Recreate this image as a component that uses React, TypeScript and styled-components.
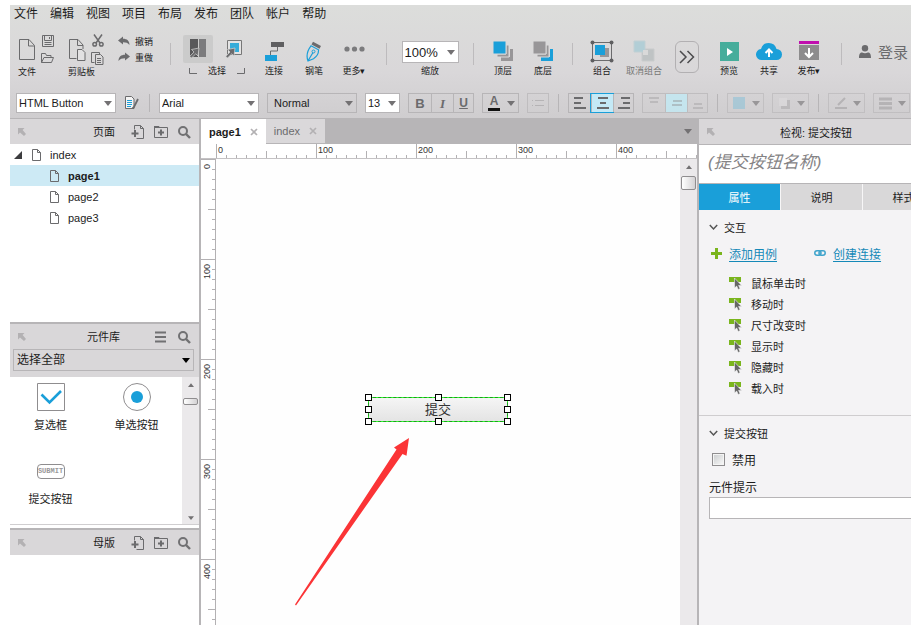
import React, { useLayoutEffect, useRef, useState } from "react";
import styled, { createGlobalStyle, css } from "styled-components";

const BLUE = "#1a9fd9";
const LINE = "#b7b5b7";
const GREY = "#6b6b6d";

const Global = createGlobalStyle`
  *, *::before, *::after { box-sizing: border-box; }
  html, body { margin: 0; background: #fff; }
  body, button, input, select {
    font-family: "Liberation Sans", "Noto Sans CJK SC", sans-serif;
    font-size: 11px;
    color: #1c1c1c;
  }
  button { padding: 0; border: 0; background: none; cursor: pointer; }
  ul, h2 { margin: 0; padding: 0; list-style: none; font-weight: normal; }
  svg { display: block; flex: none; }
`;

const Page = styled.div`
  display: flex;
  flex-direction: column;
  height: 100vh;
  padding: 5px 11px 0 10px;
  overflow: hidden;
`;

const Header = styled.header`
  flex: none;
  overflow: hidden;
  background: linear-gradient(#dcdddb, #d9d7d9 60%, #cfcdcf);
  border-bottom: 1px solid ${LINE};
`;

const MenuBar = styled.nav`
  display: flex;
  gap: 12px;
  height: 21px;
  padding-left: 4px;
`;

const MenuItem = styled.button`
  height: 18px;
  font-size: 12px;
  line-height: 18px;
  white-space: nowrap;
`;

const Toolbar = styled.div`
  display: flex;
  align-items: flex-start;
  height: 62px;
  padding: 7px 3px 0 8px;
`;

const ToolGroup = styled.div`
  display: flex;
  flex: none;
  flex-direction: column;
  width: 40px;
  margin-right: 10px;
`;

const GroupIcons = styled.div`
  display: flex;
  gap: 5px;
  align-items: center;
  height: 33px;
`;

const IconStack = styled.div`
  display: flex;
  flex-direction: column;
  gap: 5px;
`;

const IconButton = styled.button`
  display: flex;
  flex: none;
  align-items: center;
  justify-content: center;
`;

const ToolLabel = styled.span`
  font-size: 9px;
  line-height: 12px;
  white-space: nowrap;
`;

const History = styled.div`
  display: flex;
  flex: none;
  flex-direction: column;
  width: 40px;
`;

const HistoryButton = styled.button`
  display: flex;
  gap: 5px;
  align-items: center;
  height: 16px;
  font-size: 9px;
  white-space: nowrap;
`;

const ToolDivider = styled.span<{ $gap: number }>`
  flex: none;
  width: 1px;
  height: 22px;
  margin: 10px ${(p) => p.$gap}px 0;
  background: #bdbbbd;
`;

const SelectTools = styled.div`
  display: flex;
  flex: none;
  flex-direction: column;
  width: 68px;
  margin-right: 3px;
  padding-top: 2px;
`;

const SelectModes = styled.div`
  display: flex;
  gap: 6px;
  height: 28px;
`;

const ModeButton = styled(IconButton)<{ $active?: boolean }>`
  width: 30px;
  height: 28px;
  border-radius: 2px;
  background: ${(p) => (p.$active ? "#cbcbcb" : "transparent")};
`;

const BracketRow = styled.div`
  display: flex;
  align-items: center;
  justify-content: center;
  gap: 11px;
  height: 16px;
`;

const Tool = styled.button<{ $wide?: boolean; $muted?: boolean }>`
  display: flex;
  flex: none;
  flex-direction: column;
  align-items: center;
  width: ${(p) => (p.$wide ? 44 : 40)}px;
  color: ${(p) => (p.$muted ? "#777" : "#1c1c1c")};
`;

const ToolIcon = styled.span`
  display: flex;
  align-items: center;
  justify-content: center;
  height: 32px;
  padding-top: 4px;
`;

const ZoomField = styled.label`
  display: flex;
  flex: none;
  flex-direction: column;
  align-items: center;
  width: 62px;
  margin-right: 3px;
  padding-top: 8px;
  gap: 2px;
`;

const MoreTools = styled(IconButton)`
  width: 24px;
  height: 32px;
  margin: 8px 10px 0 9px;
  border: 1px solid #b2b0b2;
  border-radius: 6px;
`;

const Login = styled.button`
  display: flex;
  flex: none;
  gap: 7px;
  align-items: center;
  height: 20px;
  margin: 8px 0 0 auto;
  font-size: 15px;
  color: ${GREY};
  white-space: nowrap;
`;

const FormatBar = styled.div`
  display: flex;
  gap: 8px;
  align-items: center;
  height: 30px;
  padding-left: 6px;
`;

const FormatDivider = styled.span`
  flex: none;
  width: 1px;
  height: 18px;
  margin: 0 1px;
  background: #b7b5b7;
`;

const Combo = styled.span<{ $width?: number; $height: number; $plain?: boolean; $dark?: boolean }>`
  position: relative;
  display: block;
  flex: none;
  width: ${(p) => (p.$width ? `${p.$width}px` : "auto")};
  height: ${(p) => p.$height}px;
  border: 1px solid ${LINE};
  background: ${(p) => (p.$plain ? "transparent" : "#fff")};
  &::after {
    content: "";
    position: absolute;
    top: calc(50% - 2px);
    right: 3px;
    border: 4px solid transparent;
    border-top: 5px solid ${(p) => (p.$dark ? "#000" : "#737173")};
    border-bottom: 0;
    pointer-events: none;
  }
`;

const ComboSelect = styled.select<{ $size: number; $indent?: number }>`
  display: block;
  width: 100%;
  height: 100%;
  margin: 0;
  padding: 0 0 0 ${(p) => p.$indent ?? 2}px;
  border: 0;
  outline: 0;
  appearance: none;
  background: transparent;
  font-size: ${(p) => p.$size}px;
`;

const Segments = styled.div<{ $faded?: boolean }>`
  display: flex;
  flex: none;
  height: 20px;
  border: 1px solid ${LINE};
  opacity: ${(p) => (p.$faded ? 0.7 : 1)};
`;

const Segment = styled(IconButton)<{ $tone?: "active" | "soft" }>`
  width: 22px;
  height: 18px;
  & + & { border-left: 1px solid ${LINE}; }
  &:last-child { width: 20px; }
  ${(p) =>
    p.$tone === "active" &&
    css`
      background: #c4e9f6;
      outline: 1px solid ${BLUE};
    `}
  ${(p) =>
    p.$tone === "soft" &&
    css`
      background: #c0eefa;
    `}
`;

const SplitButton = styled.button<{ $faded?: boolean }>`
  display: flex;
  flex: none;
  align-items: center;
  justify-content: space-between;
  width: 37px;
  height: 20px;
  padding: 0 3px 0 5px;
  border: 1px solid ${LINE};
  opacity: ${(p) => (p.$faded ? 0.6 : 1)};
`;

const Workspace = styled.main`
  display: flex;
  flex: 1;
  min-height: 0;
`;

const LeftSide = styled.aside`
  display: flex;
  flex: none;
  flex-direction: column;
  width: 191px;
  border-right: 2px solid ${LINE};
`;

const Panel = styled.section<{ $height?: number }>`
  display: flex;
  flex: ${(p) => (p.$height ? "none" : "1")};
  flex-direction: column;
  min-height: ${(p) => p.$height ?? 0}px;
  & + & { border-top: 2px solid ${LINE}; }
`;

const PanelHeader = styled.div`
  display: flex;
  flex: none;
  align-items: center;
  height: 25px;
  padding: 0 8px;
  background: #d9d7d9;
`;

const PanelTitle = styled.h2<{ $gap: number }>`
  margin: 0 ${(p) => p.$gap}px 0 auto;
  font-size: 11px;
  line-height: 16px;
`;

const PanelActions = styled.div`
  display: flex;
  gap: 9px;
`;

const TreeRow = styled.li<{ $level: number; $selected?: boolean }>`
  display: flex;
  gap: 7px;
  align-items: center;
  height: 21px;
  padding-left: ${(p) => (p.$level ? 37 : 4)}px;
  background: ${(p) => (p.$selected ? "#cdeaf5" : "transparent")};
  font-weight: ${(p) => (p.$selected ? "bold" : "normal")};
`;

const LibraryFilter = styled.div`
  padding: 0 5px 6px 3px;
  background: #d9d7d9;
`;

const LibraryBody = styled.div`
  display: flex;
  height: 148px;
  margin-bottom: 3px;
  border-bottom: 1px solid #d0ced0;
`;

const WidgetGrid = styled.div`
  display: grid;
  flex: 1;
  grid-template-columns: 1fr 1fr;
  grid-auto-rows: 74px;
`;

const Widget = styled.button`
  display: flex;
  flex-direction: column;
  align-items: center;
  padding: 5px 5px 0 0;
  font-size: 11px;
`;

const WidgetIcon = styled.span`
  display: flex;
  align-items: center;
  height: 30px;
  margin-bottom: 4px;
`;

const SubmitBadge = styled.span`
  display: block;
  width: 28px;
  height: 15px;
  border: 1px solid #8f8d8f;
  border-radius: 4px;
  font: bold 7px/13px "Liberation Mono", monospace;
  color: #9a989a;
  text-align: center;
`;

const Scrollbar = styled.div`
  display: flex;
  flex: none;
  flex-direction: column;
  align-items: center;
  justify-content: space-between;
  width: 17px;
  padding: 6px 0 4px;
  background: #ebe9eb;
`;

const ScrollTop = styled.div<{ $gap: number }>`
  display: flex;
  flex-direction: column;
  gap: ${(p) => p.$gap}px;
  align-items: center;
`;

const Thumb = styled.span<{ $height: number }>`
  display: block;
  width: 15px;
  height: ${(p) => p.$height}px;
  border: 1px solid #8f8d8f;
  border-radius: 2px;
  background: linear-gradient(90deg, #fff, #d4d2d4);
`;

const Center = styled.section`
  display: flex;
  flex: 1;
  flex-direction: column;
  min-width: 0;
  border-right: 2px solid ${LINE};
`;

const TabBar = styled.div`
  display: flex;
  flex: none;
  align-items: center;
  height: 25px;
  padding-right: 5px;
  background: ${LINE};
`;

const PageTab = styled.button<{ $active?: boolean }>`
  display: flex;
  gap: 9px;
  align-items: center;
  height: ${(p) => (p.$active ? 25 : 24)}px;
  padding: 0 8px;
  align-self: flex-start;
  background: ${(p) => (p.$active ? "#fff" : "#dad8da")};
  color: ${(p) => (p.$active ? "#1c1c1c" : "#6b6b6d")};
  font-weight: ${(p) => (p.$active ? "bold" : "normal")};
`;

const TabMenu = styled(IconButton)`
  height: 25px;
  margin-left: auto;
`;

const TopRuler = styled.div`
  display: flex;
  flex: none;
  height: 15px;
  padding-left: 15px;
  border-bottom: 1px solid #c4c2c4;
`;

const CanvasRow = styled.div`
  display: flex;
  flex: 1;
  min-height: 0;
`;

const SideRuler = styled.div`
  display: flex;
  flex: none;
  flex-direction: column;
  width: 15px;
  border-right: 1px solid #b3b1b3;
`;

const RulerTrack = styled.div`
  flex: 1;
  min-width: 0;
  min-height: 0;
  overflow: hidden;
`;

const Canvas = styled.div`
  position: relative;
  flex: 1;
  min-width: 0;
  overflow: hidden;
  background: #fefefe;
`;

const Placed = styled.div<{ $x: number; $y: number }>`
  position: absolute;
  left: ${(p) => p.$x}px;
  top: ${(p) => p.$y}px;
`;

const SubmitWidget = styled.button`
  display: block;
  width: 140px;
  height: 25px;
  border: 1px dashed #1f9a1f;
  background:
    linear-gradient(#f5f5f5, #e4e4e4) padding-box,
    linear-gradient(#2dff2d, #2dff2d) border-box;
  font-size: 13px;
  line-height: 23px;
  color: #333;
`;

const Handle = styled.span<{ $col: number; $row: number }>`
  position: absolute;
  left: calc((100% - 1px) * ${(p) => p.$col / 2} - 3px);
  top: calc((100% - 1px) * ${(p) => p.$row / 2} - 3px);
  width: 7px;
  height: 7px;
  border: 1px solid #000;
  background: #fff;
`;

const Inspector = styled.aside`
  display: flex;
  flex: none;
  flex-direction: column;
  width: 212px;
  overflow: hidden;
  background: #f4f3f5;
`;

const InspectorHeader = styled(PanelHeader)`
  height: 26px;
  border-bottom: 1px solid ${LINE};
`;

const InspectorTitle = styled.h2`
  flex: 1;
  padding-left: 14px;
  font-size: 11px;
  text-align: center;
`;

const NameInput = styled.input`
  flex: none;
  width: 100%;
  height: 39px;
  padding: 0 9px 2px;
  border: 0;
  border-bottom: 1px solid ${LINE};
  outline: 0;
  background: #fff;
  font-size: 17px;
  font-style: italic;
  &::placeholder { color: #858385; opacity: 1; }
`;

const InspectorTabs = styled.div`
  display: flex;
  flex: none;
  gap: 1px;
  height: 26px;
  background: #f7f6f7;
`;

const InspectorTab = styled.button<{ $active?: boolean }>`
  flex: none;
  width: 81px;
  background: ${(p) => (p.$active ? BLUE : "#d9d8d9")};
  color: ${(p) => (p.$active ? "#fff" : "#1c1c1c")};
`;

const Section = styled.section`
  flex: none;
  padding: 8px 0 0 10px;
  & + & { border-top: 1px solid #cfcdcf; }
`;

const SectionToggle = styled.button`
  display: flex;
  gap: 6px;
  align-items: center;
  height: 18px;
`;

const LinkRow = styled.div`
  display: flex;
  gap: 37px;
  height: 18px;
  margin: 8px 0 10px 2px;
`;

const ActionLink = styled.a`
  display: flex;
  gap: 7px;
  align-items: center;
  font-size: 12px;
  color: #1589b8;
  white-space: nowrap;
  text-underline-offset: 2px;
`;

const EventList = styled.ul`
  padding: 0 0 17px 20px;
`;

const EventButton = styled.button`
  display: flex;
  gap: 9px;
  align-items: center;
  height: 21px;
`;

const CheckField = styled.label`
  display: flex;
  gap: 7px;
  align-items: center;
  height: 18px;
  margin: 8px 0 12px 3px;
  font-size: 12px;
`;

const CheckBox = styled.input`
  width: 13px;
  height: 13px;
  margin: 0;
  border: 1px solid #8f8d8f;
  appearance: none;
  background: linear-gradient(135deg, #c9cbcd, #fafafa);
  box-shadow: inset 0 0 0 1px #f4f4f4;
`;

const HintLabel = styled.label`
  display: block;
  font-size: 12px;
  line-height: 17px;
`;

const HintInput = styled.input`
  display: block;
  width: 100%;
  height: 22px;
  border: 1px solid ${LINE};
  border-right: 0;
  background: #fff;
`;

const Caret = ({ up, color = "#737173", w = 8 }: { up?: boolean; color?: string; w?: number }) => (
  <svg width={w} height={w / 2 + 1} viewBox="0 0 8 5" fill={color}>
    <path d={up ? "M0 5h8L4 0z" : "M0 0h8L4 5z"} />
  </svg>
);

const BigFile = () => (
  <svg width="18" height="24" viewBox="0 0 18 24" fill="none" stroke={GREY}>
    <path d="M1.500 1.500h9.500l5.500 6v14h-15zM10.500 1.500v6.500h6" />
  </svg>
);
const Save = () => (
  <svg width="12" height="12" viewBox="0 0 12 12" fill="none" stroke={GREY}>
    <path d="M.5.5h11v11H.5zM2.500.5v5h7v-5M7.500 2v2M2.500 7.500h7M2.500 9.500h7" />
  </svg>
);
const Open = () => (
  <svg width="13" height="12" viewBox="0 0 13 12" fill="none" stroke={GREY}>
    <path d="M.5 10.500v-9h4l1 2h4.500v2M.5 10.500l2.500-5h9.500l-2 5z" />
  </svg>
);
const Paste = () => (
  <svg width="18" height="24" viewBox="0 0 18 24" fill="none" stroke={GREY}>
    <path d="M8.500 20.500h-7v-19h8.500l5 5.500v4M9.500 1.500v6H15" />
    <path d="M9.500 11.500h4.500l3 3v8H9.500z" fill="#e2e1e2" />
  </svg>
);
const Cut = () => (
  <svg width="12" height="13" viewBox="0 0 12 13" fill="none" stroke={GREY} strokeWidth="1.500">
    <path d="M2 .5l6 8.500M10 .5L4 9" />
    <circle cx="2.700" cy="10.300" r="1.800" />
    <circle cx="9.300" cy="10.300" r="1.800" />
  </svg>
);
const Copy = () => (
  <svg width="13" height="13" viewBox="0 0 13 13" fill="none" stroke={GREY}>
    <path d="M3.500 10.500h-3V.5h8v2M4.500 2.500h5l2.500 2.500v7.500H4.500zM6 6.500h4M6 8.500h4M6 10.500h4" />
  </svg>
);
const Bend = ({ flip }: { flip?: boolean }) => (
  <svg width="12" height="10" viewBox="0 0 12 10" fill={GREY}>
    <path transform={flip ? "matrix(-1 0 0 1 12 0)" : undefined} d="M0 4.500L5 .5v2.200c4 0 6.500 2 6.500 6.300C10 7 8 6.300 5 6.300v2.200z" />
  </svg>
);
const Pointer = ({ color = GREY }: { color?: string }) => (
  <path d="M10 9L9 17l-2.200-2.200L2.500 19 .8 17.300 5 13l-2.500-2.500z" fill={color} stroke="#d6d5d6" strokeWidth=".7" />
);
const SelectIntersect = () => (
  <svg width="18" height="20" viewBox="0 0 18 20">
    <path d="M1 0h8v18H1z" fill="#58585a" />
    <path d="M10 0h7v18h-7z" fill="#7b7b7d" />
    <Pointer />
  </svg>
);
const SelectContain = () => (
  <svg width="18" height="20" viewBox="0 0 18 20">
    <path d="M2.500 1.500h14v14h-14z" fill="#e4e4e4" stroke="#777" />
    <path d="M5 4h9v9H5z" fill="#35acd9" />
    <Pointer />
  </svg>
);
const Connect = () => (
  <svg width="21" height="20" viewBox="0 0 21 20">
    <path d="M7 1h13v5H7z" fill="#5f5f61" />
    <path d="M13.500 6v4h-7v4" fill="none" stroke={GREY} />
    <path d="M1 14h12v6H1z" fill={BLUE} />
  </svg>
);
const Pen = () => (
  <svg width="16" height="21" viewBox="0 0 16 21" fill="none">
    <path d="M7 .8l8 4.200-1.500 2.700-8-4.200z" fill={GREY} />
    <path d="M5 4.800l7.500 4c.3 4-2 7-5 9L2 20c-1.500-4-1-10 3-15.200zM2.200 19.500L7 11.500" stroke={BLUE} strokeWidth="1.200" />
    <circle cx="7.500" cy="10.500" r="1.500" stroke={BLUE} />
  </svg>
);
const Dots = () => (
  <svg width="21" height="22" viewBox="0 0 21 22" fill="#7b7b7d">
    <circle cx="3" cy="9" r="2.600" />
    <circle cx="10.500" cy="9" r="2.600" />
    <circle cx="18" cy="9" r="2.600" />
  </svg>
);
const Layers = ({ back }: { back?: boolean }) => (
  <svg width="21" height="21" viewBox="0 0 21 21">
    <path d="M8 20v-4h9V8h3v12z" fill={back ? BLUE : "#989698"} />
    <path d="M4 16v-3h9V4h3v12z" fill="#989698" stroke="#dad9da" />
    <path d="M0 0h13v13H0z" fill={back ? "#989698" : BLUE} stroke="#dad9da" />
  </svg>
);
const GroupIcon = () => (
  <svg width="24" height="24" viewBox="0 0 24 24">
    <path d="M2.500 3.500h19v18h-19z" fill="none" stroke={GREY} />
    <path d="M10 9h9v9h-9z" fill="#989698" />
    <path d="M5 6h10v10H5z" fill={BLUE} />
    <g fill="#5f5f61">
      <circle cx="2.500" cy="3.500" r="2" />
      <circle cx="21.500" cy="3.500" r="2" />
      <circle cx="2.500" cy="21.500" r="2" />
      <circle cx="21.500" cy="21.500" r="2" />
    </g>
  </svg>
);
const UngroupIcon = () => (
  <svg width="22" height="23" viewBox="0 0 22 23">
    <path d="M9 9h12v12H9z" fill="#bfc3c4" stroke="#c9cbcc" />
    <path d="M1 1h11v11H1z" fill="#b2ced6" stroke="#c1d0d4" />
    <path d="M10 10h5v5h-5z" fill="#d9d9d9" />
  </svg>
);
const Chevrons = () => (
  <svg width="16" height="14" viewBox="0 0 16 14" fill="none" stroke="#4c4c4e" strokeWidth="1.500">
    <path d="M1 1l6 6-6 6M8.500 1l6 6-6 6" />
  </svg>
);
const Preview = () => (
  <svg width="19" height="19" viewBox="0 0 19 19">
    <path d="M0 0h19v19H0z" fill="#46ad9b" />
    <path d="M7 6l6 4-6 4z" fill="#fff" />
  </svg>
);
const Share = () => (
  <svg width="26" height="20" viewBox="0 0 26 20">
    <path d="M6 19a5.500 5.500 0 01-1-11 8 8 0 0115.500 0A5.500 5.500 0 0120.500 19z" fill={BLUE} />
    <path d="M13 16V9M9.500 12L13 8.500l3.500 3.500" fill="none" stroke="#fff" strokeWidth="2" />
  </svg>
);
const Publish = () => (
  <svg width="20" height="20" viewBox="0 0 20 20">
    <path d="M0 0h20v3H0z" fill="#c00fae" />
    <path d="M0 4h20v15H0z" fill="#8d8c8d" />
    <path d="M10 7v9M6 12l4 4 4-4" fill="none" stroke="#fff" strokeWidth="2" />
  </svg>
);
const User = () => (
  <svg width="12" height="13" viewBox="0 0 12 13" fill={GREY}>
    <circle cx="6" cy="3.300" r="3.200" />
    <path d="M0 13c0-4 1-5.500 3.200-5.500 1.600 1 4 1 5.600 0C11 7.500 12 9 12 13z" />
  </svg>
);
const StyleIcon = () => (
  <svg width="16" height="14" viewBox="-1 0 16 14" fill="none">
    <path d="M.5.5h6l2.500 2.500v9.500H.5z" fill="#f4f4f4" stroke={GREY} />
    <path d="M2 4.500h5M2 6.500h5M2 8.500h5M2 10.500h4" stroke={BLUE} />
    <path d="M13 3L9 11l-1.500 1.500" stroke={GREY} strokeWidth="1.800" />
  </svg>
);
const Lines = ({ d, color = GREY, w = 2 }: { d: string; color?: string; w?: number }) => (
  <svg width="14" height="14" viewBox="0 0 14 14" fill="none" stroke={color} strokeWidth={w}>
    <path d={d} />
  </svg>
);
const Letter = styled.span<{ $kind: "A" | "B" | "I" | "U" }>`
  display: block;
  width: ${(p) => (p.$kind === "A" ? "12px" : "auto")};
  height: 15px;
  border-bottom: ${(p) => (p.$kind === "A" ? "3px solid #111" : "0")};
  font-family: ${(p) => (p.$kind === "I" ? '"Liberation Serif", serif' : '"Liberation Sans", sans-serif')};
  font-size: ${(p) => (p.$kind === "A" || p.$kind === "U" ? 12 : 13)}px;
  font-style: ${(p) => (p.$kind === "I" ? "italic" : "normal")};
  font-weight: bold;
  line-height: ${(p) => (p.$kind === "A" ? 11 : 15)}px;
  color: ${GREY};
  text-align: center;
  text-decoration: ${(p) => (p.$kind === "U" ? "underline" : "none")};
`;

const Pin = () => (
  <svg width="8" height="8" viewBox="0 0 8 8" fill="#b3b1b3">
    <path d="M0 0h6.500L4.600 1.900 8 6 6 8 2 4.500 0 6.500z" />
  </svg>
);
const Doc = ({ add }: { add?: boolean }) => (
  <svg width="14" height="14" viewBox="0 0 14 14" fill="none" stroke={GREY}>
    {add ? (
      <>
        <path d="M3.500 4.500v-4h6l3 3v10h-7M9.500.5v3h3" />
        <path d="M.5 8.500h7M4 5v7" strokeWidth="2" />
      </>
    ) : (
      <path d="M3.500 1.500h5l3 3v8h-8zM8.500 1.500v3h3" />
    )}
  </svg>
);
const FolderAdd = () => (
  <svg width="14" height="14" viewBox="0 0 14 14" fill="none" stroke={GREY}>
    <path d="M.5 2.500h13v10H.5z" />
    <path d="M0 1h5l1 2H0z" fill={GREY} stroke="none" />
    <path d="M4 7.500h6M7 4.500v6" strokeWidth="2" />
  </svg>
);
const Search = () => (
  <svg width="14" height="14" viewBox="0 0 14 14" fill="none" stroke="#717173" strokeWidth="2">
    <circle cx="6" cy="6" r="4" />
    <path d="M9 9l4 4" strokeWidth="2.400" />
  </svg>
);
const Close = () => (
  <svg width="8" height="8" viewBox="0 0 8 8" stroke="#b3b1b3" strokeWidth="1.700">
    <path d="M1 1l6 6M7 1L1 7" />
  </svg>
);
const Expand = () => (
  <svg width="8" height="8" viewBox="0 0 8 8" fill="#3c3c3e">
    <path d="M8 0v8H0z" />
  </svg>
);
const Down = () => (
  <svg width="9" height="7" viewBox="0 0 9 7" fill="none" stroke="#555" strokeWidth="1.500">
    <path d="M.8 1l3.700 4 3.700-4" />
  </svg>
);
const Plus = () => (
  <svg width="11" height="11" viewBox="0 0 11 11" stroke="#7ab51d" strokeWidth="3">
    <path d="M5.500 0v11M0 5.500h11" />
  </svg>
);
const Chain = () => (
  <svg width="12" height="8" viewBox="0 0 12 8" fill="none" stroke="#3fa3cb" strokeWidth="1.500">
    <rect x=".8" y="1.800" width="6.200" height="4.400" rx="2.200" />
    <rect x="5" y="1.800" width="6.200" height="4.400" rx="2.200" />
  </svg>
);
const EventIcon = () => (
  <svg width="13" height="14" viewBox="0 0 13 14">
    <path d="M0 1h12v5H0z" fill="#7ab51d" />
    <path d="M5.500 2v10l2.200-1.900 1.500 3.400 1.900-.9-1.500-3.200h3z" fill="#666" stroke="#f4f3f5" strokeWidth=".6" />
  </svg>
);
const CheckWidget = () => (
  <svg width="28" height="28" viewBox="0 0 28 28" fill="none">
    <path d="M.5.5h27v27H.5z" stroke="#8f8d8f" />
    <path d="M4.500 11.500l8 8L24 8" stroke={BLUE} strokeWidth="2.600" />
  </svg>
);
const RadioWidget = () => (
  <svg width="28" height="28" viewBox="0 0 28 28" fill="none">
    <circle cx="14" cy="14" r="13.500" stroke="#8f8d8f" />
    <circle cx="14" cy="14" r="6" fill={BLUE} />
  </svg>
);

const LABEL_ROOM = 24;

function Ruler({ vertical }: { vertical?: boolean }) {
  const track = useRef<HTMLDivElement>(null);
  const [length, setLength] = useState(0);

  useLayoutEffect(() => {
    const el = track.current;
    if (!el) return;
    const measure = () => setLength(vertical ? el.clientHeight : el.clientWidth);
    measure();
    const observer = new ResizeObserver(measure);
    observer.observe(el);
    return () => observer.disconnect();
  }, [vertical]);

  const ticks = Array.from({ length: Math.ceil(length / 10) }, (_, i) => i * 10);
  const line = ticks
    .map((t) => {
      const from = t % 100 === 0 ? 0 : t % 50 === 0 ? 7 : 11;
      return vertical ? `M${from} ${t + 0.5}H15` : `M${t + 0.5} ${from}V15`;
    })
    .join("");
  return (
    <RulerTrack ref={track}>
      <svg width={vertical ? 15 : length} height={vertical ? length : 15} fontSize="9" fill="#333">
        <path d={line} stroke="#b3b1b3" />
        {ticks
          .filter((t) => t % 100 === 0 && t + LABEL_ROOM < length)
          .map((t) =>
            vertical ? (
              <text key={t} textAnchor="end" transform={`translate(9 ${t + 5}) rotate(-90)`}>{t}</text>
            ) : (
              <text key={t} x={t + 2} y="9">{t}</text>
            )
          )}
      </svg>
    </RulerTrack>
  );
}

const Arrow = () => (
  <svg width="116" height="170" viewBox="0 0 116 170">
    <path d="M114 1L99 10.500l2.500 2L0 167.500l1 1L107.500 17l4 1.800z" fill="#fb3436" />
  </svg>
);

const menus = ["文件", "编辑", "视图", "项目", "布局", "发布", "团队", "帐户", "帮助"];
const events = ["鼠标单击时", "移动时", "尺寸改变时", "显示时", "隐藏时", "载入时"];
const handles = [[0, 0], [1, 0], [2, 0], [0, 1], [2, 1], [0, 2], [1, 2], [2, 2]];

interface ToolItemProps {
  label: string;
  icon: React.ReactNode;
  wide?: boolean;
  muted?: boolean;
}
const ToolItem = ({ label, icon, wide, muted }: ToolItemProps) => (
  <Tool $wide={wide} $muted={muted}>
    <ToolIcon>{icon}</ToolIcon>
    <ToolLabel>{label}</ToolLabel>
  </Tool>
);

interface DropdownProps {
  label: string;
  value: string;
  width?: number;
  height?: number;
  size?: number;
  indent?: number;
  plain?: boolean;
  dark?: boolean;
}
const Dropdown = ({ label, value, width, height = 20, size = 11, indent, plain, dark }: DropdownProps) => (
  <Combo $width={width} $height={height} $plain={plain} $dark={dark}>
    <ComboSelect aria-label={label} $size={size} $indent={indent} defaultValue={value}>
      <option>{value}</option>
    </ComboSelect>
  </Combo>
);

const PageActions = () => (
  <PanelActions>
    <IconButton aria-label="添加页面"><Doc add /></IconButton>
    <IconButton aria-label="添加文件夹"><FolderAdd /></IconButton>
    <IconButton aria-label="搜索"><Search /></IconButton>
  </PanelActions>
);

export default function App() {
  return (
    <Page>
      <Global />
      <Header>
        <MenuBar>
          {menus.map((m) => <MenuItem key={m}>{m}</MenuItem>)}
        </MenuBar>
        <Toolbar>
          <ToolGroup>
            <GroupIcons>
              <IconButton aria-label="新建"><BigFile /></IconButton>
              <IconStack>
                <IconButton aria-label="保存"><Save /></IconButton>
                <IconButton aria-label="打开"><Open /></IconButton>
              </IconStack>
            </GroupIcons>
            <ToolLabel>文件</ToolLabel>
          </ToolGroup>
          <ToolGroup>
            <GroupIcons>
              <IconButton aria-label="粘贴"><Paste /></IconButton>
              <IconStack>
                <IconButton aria-label="剪切"><Cut /></IconButton>
                <IconButton aria-label="复制"><Copy /></IconButton>
              </IconStack>
            </GroupIcons>
            <ToolLabel>剪贴板</ToolLabel>
          </ToolGroup>
          <History>
            <HistoryButton><Bend />撤销</HistoryButton>
            <HistoryButton><Bend flip />重做</HistoryButton>
          </History>
          <ToolDivider $gap={12} />
          <SelectTools>
            <SelectModes>
              <ModeButton $active aria-label="相交选择"><SelectIntersect /></ModeButton>
              <ModeButton aria-label="包含选择"><SelectContain /></ModeButton>
            </SelectModes>
            <BracketRow>
              <svg width="8" height="6" fill="none" stroke={GREY}><path d="M.5 0v5.500H8" /></svg>
              <ToolLabel>选择</ToolLabel>
              <svg width="8" height="6" fill="none" stroke={GREY}><path d="M7.500 0v5.500H0" /></svg>
            </BracketRow>
          </SelectTools>
          <ToolItem label="连接" icon={<Connect />} />
          <ToolItem label="钢笔" icon={<Pen />} />
          <ToolItem label="更多▾" icon={<Dots />} />
          <ToolDivider $gap={12} />
          <ZoomField>
            <Dropdown label="缩放" value="100%" width={57} height={22} size={13} />
            <ToolLabel>缩放</ToolLabel>
          </ZoomField>
          <ToolDivider $gap={9} />
          <ToolItem label="顶层" icon={<Layers />} />
          <ToolItem label="底层" icon={<Layers back />} />
          <ToolDivider $gap={9} />
          <ToolItem label="组合" icon={<GroupIcon />} />
          <ToolItem label="取消组合" icon={<UngroupIcon />} wide muted />
          <MoreTools aria-label="更多工具"><Chevrons /></MoreTools>
          <ToolItem label="预览" icon={<Preview />} />
          <ToolItem label="共享" icon={<Share />} />
          <ToolItem label="发布▾" icon={<Publish />} />
          <ToolDivider $gap={12} />
          <Login><User />登录</Login>
        </Toolbar>
        <FormatBar>
          <Dropdown label="元件样式" value="HTML Button" width={100} />
          <IconButton aria-label="管理样式"><StyleIcon /></IconButton>
          <FormatDivider />
          <Dropdown label="字体" value="Arial" width={100} />
          <Dropdown label="字重" value="Normal" width={90} indent={6} plain />
          <Dropdown label="字号" value="13" width={35} />
          <Segments>
            <Segment aria-label="粗体"><Letter $kind="B">B</Letter></Segment>
            <Segment aria-label="斜体"><Letter $kind="I">I</Letter></Segment>
            <Segment aria-label="下划线"><Letter $kind="U">U</Letter></Segment>
          </Segments>
          <SplitButton aria-label="文字颜色"><Letter $kind="A">A</Letter><Caret /></SplitButton>
          <Segments $faded>
            <Segment aria-label="项目符号"><Lines color="#aaa8aa" w={1} d="M1 4.500h1M4 4.500h9M1 9.500h1M4 9.500h9" /></Segment>
          </Segments>
          <FormatDivider />
          <Segments>
            <Segment aria-label="左对齐"><Lines d="M1 2h9M1 7h7M1 12h12" /></Segment>
            <Segment aria-label="居中" $tone="active"><Lines d="M2 2h10M4 7h6M1 12h12" /></Segment>
            <Segment aria-label="右对齐"><Lines d="M4 2h9M6 7h7M1 12h12" /></Segment>
          </Segments>
          <Segments $faded>
            <Segment aria-label="顶部对齐"><Lines color="#b3b1b3" d="M2 2h10M3 6h8" /></Segment>
            <Segment aria-label="垂直居中" $tone="soft"><Lines color="#9fb9c0" d="M3 5h9M2 9h10" /></Segment>
            <Segment aria-label="底部对齐"><Lines color="#b3b1b3" d="M3 8h8M2 12h10" /></Segment>
          </Segments>
          <FormatDivider />
          <SplitButton $faded aria-label="填充">
            <svg width="12" height="12"><path d="M0 0h12v12H0z" fill="#8fc3d8" /></svg>
            <Caret />
          </SplitButton>
          <SplitButton $faded aria-label="阴影">
            <svg width="12" height="12"><path d="M3 3h9v9H3z" fill="#aeacae" /><path d="M1 1h8v8H1z" fill="#dddbdd" /></svg>
            <Caret />
          </SplitButton>
          <FormatDivider />
          <SplitButton $faded aria-label="线条颜色">
            <Lines color="#a3a1a3" d="M1 12h12M4 9l7-7" />
            <Caret />
          </SplitButton>
          <SplitButton $faded aria-label="线宽">
            <Lines color="#a3a1a3" w={3} d="M0 3h13M0 7.500h13M0 12h13" />
            <Caret />
          </SplitButton>
        </FormatBar>
      </Header>
      <Workspace>
        <LeftSide>
          <Panel $height={203}>
            <PanelHeader>
              <Pin />
              <PanelTitle $gap={16}>页面</PanelTitle>
              <PageActions />
            </PanelHeader>
            <ul>
              <TreeRow $level={0}><Expand /><Doc />index</TreeRow>
              {["page1", "page2", "page3"].map((p, i) => (
                <TreeRow key={p} $level={1} $selected={i === 0}><Doc /><span>{p}</span></TreeRow>
              ))}
            </ul>
          </Panel>
          <Panel $height={206}>
            <PanelHeader>
              <Pin />
              <PanelTitle $gap={34}>元件库</PanelTitle>
              <PanelActions>
                <IconButton aria-label="菜单"><Lines color="#717173" d="M1 2.500h11M1 7h11M1 11.500h11" /></IconButton>
                <IconButton aria-label="搜索"><Search /></IconButton>
              </PanelActions>
            </PanelHeader>
            <LibraryFilter>
              <Dropdown label="元件库" value="选择全部" height={22} size={12} indent={3} plain dark />
            </LibraryFilter>
            <LibraryBody>
              <WidgetGrid>
                <Widget><WidgetIcon><CheckWidget /></WidgetIcon>复选框</Widget>
                <Widget><WidgetIcon><RadioWidget /></WidgetIcon>单选按钮</Widget>
                <Widget><WidgetIcon><SubmitBadge>SUBMIT</SubmitBadge></WidgetIcon>提交按钮</Widget>
              </WidgetGrid>
              <Scrollbar>
                <ScrollTop $gap={11}><Caret up w={6} /><Thumb $height={7} /></ScrollTop>
                <Caret w={6} />
              </Scrollbar>
            </LibraryBody>
          </Panel>
          <Panel>
            <PanelHeader>
              <Pin />
              <PanelTitle $gap={16}>母版</PanelTitle>
              <PageActions />
            </PanelHeader>
          </Panel>
        </LeftSide>
        <Center>
          <TabBar>
            <PageTab $active>page1<Close /></PageTab>
            <PageTab>index<Close /></PageTab>
            <TabMenu aria-label="标签列表"><Caret /></TabMenu>
          </TabBar>
          <TopRuler><Ruler /></TopRuler>
          <CanvasRow>
            <SideRuler><Ruler vertical /></SideRuler>
            <Canvas>
              <Placed $x={152} $y={238}>
                <SubmitWidget>提交</SubmitWidget>
                {handles.map(([c, r]) => <Handle key={`${c}${r}`} $col={c} $row={r} />)}
              </Placed>
              <Placed $x={79} $y={278}><Arrow /></Placed>
            </Canvas>
            <Scrollbar>
              <ScrollTop $gap={7}><Caret up w={6} /><Thumb $height={14} /></ScrollTop>
            </Scrollbar>
          </CanvasRow>
        </Center>
        <Inspector>
          <InspectorHeader>
            <Pin />
            <InspectorTitle>检视: 提交按钮</InspectorTitle>
          </InspectorHeader>
          <NameInput aria-label="名称" placeholder="(提交按钮名称)" />
          <InspectorTabs>
            <InspectorTab $active>属性</InspectorTab>
            <InspectorTab>说明</InspectorTab>
            <InspectorTab>样式</InspectorTab>
          </InspectorTabs>
          <Section>
            <SectionToggle><Down />交互</SectionToggle>
            <LinkRow>
              <ActionLink href="#add-case"><Plus />添加用例</ActionLink>
              <ActionLink href="#create-link"><Chain />创建连接</ActionLink>
            </LinkRow>
            <EventList>
              {events.map((e) => (
                <li key={e}><EventButton><EventIcon />{e}</EventButton></li>
              ))}
            </EventList>
          </Section>
          <Section>
            <SectionToggle><Down />提交按钮</SectionToggle>
            <CheckField><CheckBox type="checkbox" />禁用</CheckField>
            <HintLabel htmlFor="hint">元件提示</HintLabel>
            <HintInput id="hint" type="text" />
          </Section>
        </Inspector>
      </Workspace>
    </Page>
  );
}
